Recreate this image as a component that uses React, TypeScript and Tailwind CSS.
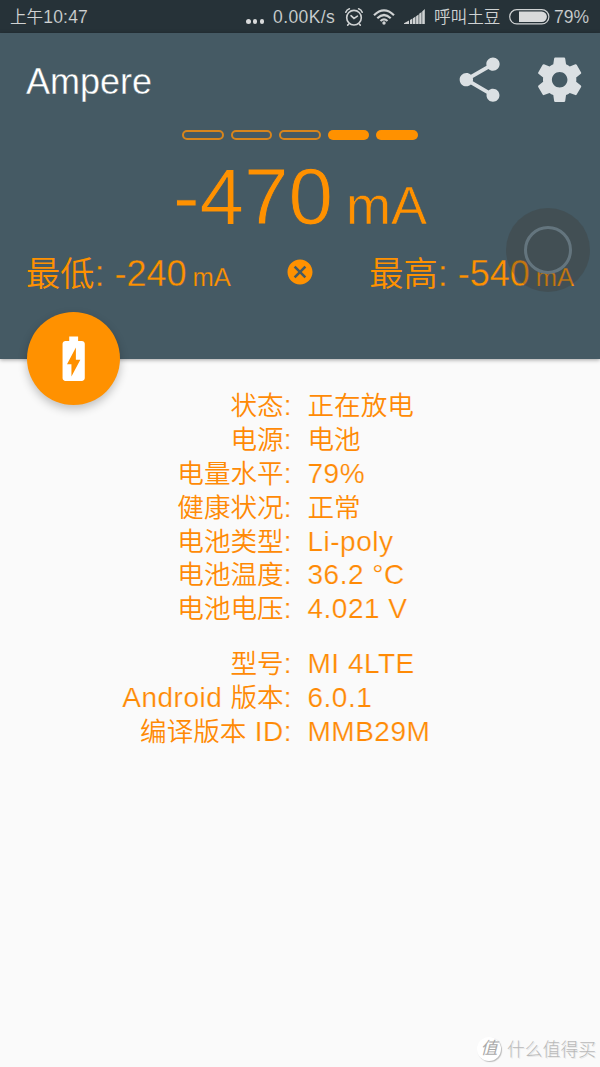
import React from "react";

const ORANGE = "#ff9100";

/** Sets Han runs slightly smaller and lighter than the Latin text around them. */
function Mixed({ text }: { text: string }) {
  return (
    <>
      {text.split(/([\u4e00-\u9fff]+)/).map((part, i) =>
        /[\u4e00-\u9fff]/.test(part) ? (
          <span key={i} className="text-[0.95em] font-[350] tracking-normal [-webkit-text-stroke-width:0]">
            {part}
          </span>
        ) : (
          <span key={i}>{part}</span>
        ),
      )}
    </>
  );
}

function AlarmIcon() {
  return (
    <svg width="20" height="20" viewBox="0 0 20 20" fill="none" stroke="#cfd2d3" strokeLinecap="round">
      <circle cx="10" cy="10.7" r="7.3" strokeWidth="1.6" />
      <path d="M7 8.7l3 2.7 3.4-2.2" strokeWidth="1.6" />
      <path d="M1.8 5.2Q2.8 2.6 5.4 1.8M18.2 5.2Q17.2 2.6 14.6 1.8M4.6 17.2l-.9.9M15.4 17.2l.9.9" strokeWidth="1.6" />
    </svg>
  );
}

function WifiIcon() {
  return (
    <svg width="22" height="16" viewBox="0 0 22 16" fill="none" stroke="#cfd2d3" strokeWidth="2.2">
      <path d="M1 6.2Q11-3.4 21 6.2" />
      <path d="M4.3 9.2Q11 2.8 17.7 9.2" />
      <path d="M7.5 12Q11 8.8 14.5 12" />
      <circle cx="11" cy="14" r="1.7" fill="#cfd2d3" stroke="none" />
    </svg>
  );
}

function SignalIcon() {
  return (
    <svg width="21" height="15" viewBox="0 0 21 15" fill="#cfd2d3">
      <path d="M0 15v-.8L5 11.6V15zM6 15v-4l2.4-1.4V15zM9 15V9.2l2.5-1.6V15zM12.1 15V7.2l2.5-1.8V15zM15.2 15V4.8l2.4-1.9V15zM18.2 15V2.4L20.8 0v15z" />
    </svg>
  );
}

function BatteryIcon() {
  return (
    <svg width="41" height="16" viewBox="0 0 41 16">
      <rect x=".7" y=".7" width="39.2" height="14.2" rx="7.1" fill="none" stroke="#cfd2d3" strokeWidth="1.2" />
      <path d="M10 2.6h22.7a5.2 5.2 0 0 1 0 10.4H10z" fill="#d8dadb" />
    </svg>
  );
}

function ShareIcon() {
  return (
    <svg className="size-[53.33px]" viewBox="0 0 24 24" fill="#dbe0e3">
      <path d="M18 16.08c-.76 0-1.44.3-1.96.77L8.91 12.7c.05-.23.09-.46.09-.7s-.04-.47-.09-.7l7.05-4.11c.54.5 1.25.81 2.04.81 1.66 0 3-1.34 3-3s-1.34-3-3-3-3 1.34-3 3c0 .24.04.47.09.7L8.04 9.81C7.5 9.31 6.79 9 6 9c-1.66 0-3 1.34-3 3s1.34 3 3 3c.79 0 1.5-.31 2.04-.81l7.12 4.16c-.05.21-.08.43-.08.65 0 1.61 1.31 2.92 2.92 2.92 1.61 0 2.92-1.31 2.92-2.92s-1.31-2.92-2.92-2.92z" />
    </svg>
  );
}

function SettingsIcon() {
  return (
    <svg className="size-[53.33px]" viewBox="0 0 24 24" fill="#dbe0e3">
      <path d="M19.43 12.98c.04-.32.07-.64.07-.98s-.03-.66-.07-.98l2.11-1.65c.19-.15.24-.42.12-.64l-2-3.46c-.12-.22-.39-.3-.61-.22l-2.49 1c-.52-.4-1.08-.73-1.69-.98l-.38-2.65C14.46 2.18 14.25 2 14 2h-4c-.25 0-.46.18-.49.42l-.38 2.65c-.61.25-1.17.59-1.69.98l-2.49-1c-.23-.09-.49 0-.61.22l-2 3.46c-.13.22-.07.49.12.64l2.11 1.65c-.04.32-.07.65-.07.98s.03.66.07.98l-2.11 1.65c-.19.15-.24.42-.12.64l2 3.46c.12.22.39.3.61.22l2.49-1c.52.4 1.08.73 1.69.98l.38 2.65c.03.24.24.42.49.42h4c.25 0 .46-.18.49-.42l.38-2.65c.61-.25 1.17-.59 1.69-.98l2.49 1c.23.09.49 0 .61-.22l2-3.46c.12-.22.07-.49-.12-.64l-2.11-1.65zM12 15.5c-1.93 0-3.5-1.57-3.5-3.5s1.57-3.5 3.5-3.5 3.5 1.57 3.5 3.5-1.57 3.5-3.5 3.5z" />
    </svg>
  );
}

function CancelIcon() {
  return (
    <svg className="mb-[6px] size-[30px]" viewBox="0 0 24 24" fill={ORANGE}>
      <path d="M12 2C6.47 2 2 6.47 2 12s4.47 10 10 10 10-4.47 10-10S17.53 2 12 2zm5 13.59L15.59 17 12 13.41 8.41 17 7 15.59 10.59 12 7 8.41 8.41 7 12 10.59 15.59 7 17 8.41 13.41 12 17 15.59z" />
    </svg>
  );
}

function ChargingIcon() {
  return (
    <svg className="size-[53.33px]" viewBox="0 0 24 24" fill="#fff">
      <path d="M15.67 4H14V2h-4v2H8.33C7.6 4 7 4.6 7 5.33v15.33C7 21.4 7.6 22 8.33 22h7.33c.74 0 1.34-.6 1.34-1.33V5.33C17 4.6 16.4 4 15.67 4zM11 20v-5.5H9L13 7v5.5h2L11 20z" />
    </svg>
  );
}

function StatusBar() {
  return (
    <div className="flex h-[33px] items-center bg-[#263238] pr-[10px] pl-[10px] text-[17.5px] text-[#cfd2d3] [-webkit-text-stroke:0.12px_#263238]">
      <div className="w-[236px] pt-[2px] tracking-[0.2px] whitespace-nowrap">
        <Mixed text="上午10:47" />
      </div>
      <div className="mt-[10px] flex w-[27px] gap-[2.2px]">
        <i className="size-[4.6px] rounded-full bg-[#d8dadb]" />
        <i className="size-[4.6px] rounded-full bg-[#d8dadb]" />
        <i className="size-[4.6px] rounded-full bg-[#d8dadb]" />
      </div>
      <div className="w-[71px] pt-[2px] tracking-[0.4px] whitespace-nowrap">0.00K/s</div>
      <div className="w-[29px]"><AlarmIcon /></div>
      <div className="w-[31px]"><WifiIcon /></div>
      <div className="w-[30px]"><SignalIcon /></div>
      <div className="w-[75px] pt-[2px] whitespace-nowrap"><Mixed text="呼叫土豆" /></div>
      <div className="w-[45px]"><BatteryIcon /></div>
      <div className="pt-[1px] whitespace-nowrap">79%</div>
    </div>
  );
}

function Gauge({ level }: { level: number }) {
  return (
    <div className="flex justify-center gap-[7px]">
      {[1, 2, 3, 4, 5].map((n) => (
        <div
          key={n}
          className={
            n > 5 - level
              ? "h-[10px] w-[41.5px] rounded-full bg-[#ff9100]"
              : "h-[10px] w-[41.5px] rounded-full border-2 border-[#d8851c]"
          }
        />
      ))}
    </div>
  );
}

function Extreme({ label, value }: { label: string; value: string }) {
  return (
    <div className="text-[36px] leading-[40px] whitespace-nowrap [-webkit-text-stroke:0.35px_#455a64]">
      <Mixed text={label} /> {value}
      <span className="ml-[6px] text-[25.5px] [-webkit-text-stroke-width:0.25px]">mA</span>
    </div>
  );
}

function Header() {
  return (
    <header className="relative flex h-[326px] flex-col bg-[#455a64] text-[#ff9100] shadow-[0_1px_4px_rgba(0,0,0,0.35)]">
      <div className="flex h-[94px] items-center pr-[13.5px] pl-[26px]">
        <h1 className="flex-1 pt-[3px] text-[36px] text-white [-webkit-text-stroke:0.35px_#455a64]">Ampere</h1>
        <ShareIcon />
        <div className="w-[26.5px]" />
        <SettingsIcon />
      </div>
      <div className="pt-[3px]">
        <Gauge level={2} />
      </div>
      <div className="mt-[12px] text-center text-[80px] leading-[90px] whitespace-nowrap [-webkit-text-stroke:0.9px_#455a64]">
        -470<span className="ml-[13px] text-[54px] [-webkit-text-stroke-width:0.6px]">mA</span>
      </div>
      <div className="flex h-[50px] items-center justify-between px-[26px]">
        <Extreme label="最低:" value="-240" />
        <CancelIcon />
        <Extreme label="最高:" value="-540" />
      </div>
      <div className="absolute top-[279px] left-[26.6px] flex size-[93.4px] items-center justify-center rounded-full bg-[#ff9100] shadow-[0_4px_10px_rgba(0,0,0,0.24)]">
        <ChargingIcon />
      </div>
      <div className="absolute top-[175px] left-[506px] flex size-[84px] items-center justify-center rounded-full bg-[#3b3733]/30">
        <div className="size-[48px] rounded-full border-[3px] border-[#64757e]" />
      </div>
    </header>
  );
}

const BATTERY: [string, string][] = [
  ["状态:", "正在放电"],
  ["电源:", "电池"],
  ["电量水平:", "79%"],
  ["健康状况:", "正常"],
  ["电池类型:", "Li-poly"],
  ["电池温度:", "36.2 °C"],
  ["电池电压:", "4.021 V"],
];

const DEVICE: [string, string][] = [
  ["型号:", "MI 4LTE"],
  ["Android 版本:", "6.0.1"],
  ["编译版本 ID:", "MMB29M"],
];

function Rows({ items }: { items: [string, string][] }) {
  return (
    <dl className="text-[28px] leading-[33.9px] tracking-[0.5px] [-webkit-text-stroke:0.2px_#fafafa]">
      {items.map(([label, value]) => (
        <div key={label} className="flex h-[33.9px] gap-[15.5px] whitespace-nowrap">
          <dt className="w-[292px] text-right">
            <Mixed text={label} />
          </dt>
          <dd>
            <Mixed text={value} />
          </dd>
        </div>
      ))}
    </dl>
  );
}

export default function App() {
  return (
    <div className="flex h-[1067px] w-[600px] flex-col overflow-hidden bg-[#fafafa] font-['Liberation_Sans','Noto_Sans_CJK_SC',sans-serif]">
      <StatusBar />
      <Header />
      <main className="flex flex-1 flex-col gap-[21px] pt-[30px] text-[#ff8a05]">
        <Rows items={BATTERY} />
        <Rows items={DEVICE} />
      </main>
      <footer className="flex h-[35px] items-center justify-end gap-[6px] pr-[4px] pb-[1px]">
        <span className="flex size-[24px] items-center justify-center rounded-full bg-white text-[17px] text-[#a9a9a9] italic shadow-[1px_1px_1px_#bbb]">
          值
        </span>
        <span className="pt-[3px] text-[17.8px] font-light text-[#b9b9b9] [text-shadow:1px_1px_0_#e8e8e8]">什么值得买</span>
      </footer>
    </div>
  );
}
